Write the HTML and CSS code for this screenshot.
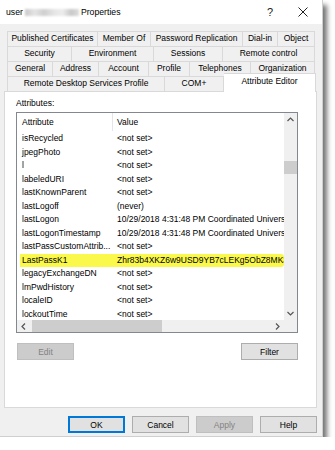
FILE: index.html
```html
<!DOCTYPE html>
<html lang="en">
<head>
    <meta charset="UTF-8">
    <title>Properties</title>
    <link rel="stylesheet" href="styles.css">
</head>
<body>
    <div class="dialog">
        <div class="titlebar">
            <span class="title">user<span class="blurred"></span>Properties</span>
            <span class="help-mark">?</span>
            <span class="close-mark">
                <svg width="10" height="10" viewBox="0 0 10 10"><path d="M0.5 0.5 L9.5 9.5 M9.5 0.5 L0.5 9.5" stroke="#222" stroke-width="1" fill="none"/></svg>
            </span>
        </div>
        <div class="content">
            <div class="tabs">
                <div class="tab-row">
                    <div class="tab" style="width:91px">Published Certificates</div>
                    <div class="tab" style="width:53px">Member Of</div>
                    <div class="tab" style="width:92px">Password Replication</div>
                    <div class="tab" style="width:35px">Dial-in</div>
                    <div class="tab" style="width:37px">Object</div>
                </div>
                <div class="tab-row">
                    <div class="tab" style="width:65px">Security</div>
                    <div class="tab" style="width:82px">Environment</div>
                    <div class="tab" style="width:69px">Sessions</div>
                    <div class="tab" style="width:92px">Remote control</div>
                </div>
                <div class="tab-row">
                    <div class="tab" style="width:46px">General</div>
                    <div class="tab" style="width:46px">Address</div>
                    <div class="tab" style="width:50px">Account</div>
                    <div class="tab" style="width:41px">Profile</div>
                    <div class="tab" style="width:61px">Telephones</div>
                    <div class="tab" style="width:64px">Organization</div>
                </div>
                <div class="tab-row last">
                    <div class="tab" style="width:158px">Remote Desktop Services Profile</div>
                    <div class="tab" style="width:59px">COM+</div>
                    <div class="tab selected" style="width:92px">Attribute Editor</div>
                </div>
            </div>

            <div class="panel">
                <div class="panel-label">Attributes:</div>
                <div class="listbox">
                    <div class="list-view">
                        <div class="list-head">
                            <span class="col-attr">Attribute</span>
                            <span class="col-val">Value</span>
                        </div>
                        <div class="list-body">
                            <div class="row"><span class="col-attr">isRecycled</span><span class="col-val">&lt;not set&gt;</span></div>
                            <div class="row"><span class="col-attr">jpegPhoto</span><span class="col-val">&lt;not set&gt;</span></div>
                            <div class="row"><span class="col-attr">l</span><span class="col-val">&lt;not set&gt;</span></div>
                            <div class="row"><span class="col-attr">labeledURI</span><span class="col-val">&lt;not set&gt;</span></div>
                            <div class="row"><span class="col-attr">lastKnownParent</span><span class="col-val">&lt;not set&gt;</span></div>
                            <div class="row"><span class="col-attr">lastLogoff</span><span class="col-val">(never)</span></div>
                            <div class="row"><span class="col-attr">lastLogon</span><span class="col-val">10/29/2018 4:31:48 PM Coordinated Universal Time</span></div>
                            <div class="row"><span class="col-attr">lastLogonTimestamp</span><span class="col-val">10/29/2018 4:31:48 PM Coordinated Universal Time</span></div>
                            <div class="row"><span class="col-attr">lastPassCustomAttrib...</span><span class="col-val">&lt;not set&gt;</span></div>
                            <div class="row marked"><span class="col-attr">LastPassK1</span><span class="col-val">Zhr83b4XKZ6w9USD9YB7cLEKg5ObZ8MK3</span></div>
                            <div class="row"><span class="col-attr">legacyExchangeDN</span><span class="col-val">&lt;not set&gt;</span></div>
                            <div class="row"><span class="col-attr">lmPwdHistory</span><span class="col-val">&lt;not set&gt;</span></div>
                            <div class="row"><span class="col-attr">localeID</span><span class="col-val">&lt;not set&gt;</span></div>
                            <div class="row"><span class="col-attr">lockoutTime</span><span class="col-val">&lt;not set&gt;</span></div>
                        </div>
                    </div>
                    <div class="vscroll">
                        <div class="arrow-box">
                            <svg width="7" height="5" viewBox="0 0 7 5"><path d="M0.5 4 L3.5 1 L6.5 4" stroke="#555" stroke-width="1.2" fill="none"/></svg>
                        </div>
                        <div class="vtrack"><div class="vthumb"></div></div>
                        <div class="arrow-box">
                            <svg width="7" height="5" viewBox="0 0 7 5"><path d="M0.5 1 L3.5 4 L6.5 1" stroke="#555" stroke-width="1.2" fill="none"/></svg>
                        </div>
                    </div>
                    <div class="hscroll">
                        <div class="arrow-box">
                            <svg width="5" height="7" viewBox="0 0 5 7"><path d="M4 0.5 L1 3.5 L4 6.5" stroke="#555" stroke-width="1.2" fill="none"/></svg>
                        </div>
                        <div class="htrack"><div class="hthumb"></div></div>
                        <div class="arrow-box">
                            <svg width="5" height="7" viewBox="0 0 5 7"><path d="M1 0.5 L4 3.5 L1 6.5" stroke="#555" stroke-width="1.2" fill="none"/></svg>
                        </div>
                    </div>
                    <div class="corner"></div>
                </div>
                <div class="panel-buttons">
                    <button class="btn disabled">Edit</button>
                    <button class="btn">Filter</button>
                </div>
            </div>

            <div class="footer">
                <button class="btn default">OK</button>
                <button class="btn">Cancel</button>
                <button class="btn disabled">Apply</button>
                <button class="btn">Help</button>
            </div>
        </div>
    </div>
</body>
</html>
```

FILE: styles.css
```css
body {
    margin: 0;
    padding: 0;
    background-color: #ffffff;
    font-family: "Liberation Sans", Arial, sans-serif;
    font-size: 8.5px;
    color: #000;
}
.dialog {
    width: 323px;
    height: 437px;
    box-sizing: border-box;
    background-color: #f0f0f0;
    border-right: 1px solid #cfcfcf;
    border-bottom: 1px solid #cfcfcf;
    box-shadow: 4px 5px 5px rgba(0,0,0,0.55);
}
.titlebar {
    height: 24px;
    background-color: #ffffff;
    display: flex;
    align-items: center;
    padding-left: 6px;
}
.title {
    display: flex;
    align-items: center;
    font-size: 8.7px;
    flex: 1;
}
.blurred {
    display: inline-block;
    width: 54px;
    height: 7px;
    margin: 0 2px 0 2px;
    background: linear-gradient(to right, #c9c9c9 0, #e4e4e4 18%, #cfcfcf 35%, #e6e6e6 55%, #ececec 70%, #c8c8c8 85%, #dcdcdc 100%);
    filter: blur(1px);
}
.help-mark {
    font-size: 11px;
    width: 12px;
    margin-right: 19px;
    color: #222;
}
.close-mark {
    display: flex;
    margin-right: 14px;
}
.content {
    padding: 7px 5px 0 4px;
}

/* tabs */
.tabs {
    margin-left: 3px;
}
.tab-row {
    display: flex;
    height: 15px;
}
.tab {
    box-sizing: border-box;
    height: 15px;
    border: 1px solid #d9d9d9;
    border-left: none;
    border-bottom: none;
    text-align: center;
    line-height: 13px;
    white-space: nowrap;
    overflow: hidden;
}
.tab:first-child {
    border-left: 1px solid #d9d9d9;
}
.tab.selected {
    position: relative;
    z-index: 1;
    height: 19px;
    margin-top: -3px;
    background-color: #ffffff;
    line-height: 15px;
}

/* panel */
.panel {
    box-sizing: border-box;
    width: 313px;
    height: 317px;
    background-color: #ffffff;
    border: 1px solid #d9d9d9;
    padding: 6px 0 0 11px;
}
.panel-label {
    line-height: 11px;
    margin-bottom: 3px;
}
.listbox {
    box-sizing: border-box;
    width: 282px;
    height: 221px;
    border: 1px solid #828790;
    display: grid;
    grid-template-columns: 1fr 13px;
    grid-template-rows: 1fr 12px;
}
.list-view {
    overflow: hidden;
    white-space: nowrap;
}
.list-head {
    display: flex;
    height: 18px;
    line-height: 18px;
}
.list-head .col-attr {
    border-right: 1px solid #e5e5e5;
}
.list-body {
    padding-top: 1px;
}
.row {
    display: flex;
    height: 13.5px;
    line-height: 13.5px;
}
.row.marked {
    background: linear-gradient(to right, transparent 3px, #fbf84c 3px);
    border-radius: 3px;
}
.col-attr {
    box-sizing: border-box;
    width: 96px;
    flex: none;
    padding-left: 5px;
    overflow: hidden;
}
.col-val {
    padding-left: 4px;
}

/* scrollbars */
.vscroll {
    background-color: #f0f0f0;
    display: flex;
    flex-direction: column;
}
.vscroll .arrow-box {
    height: 13px;
    display: flex;
    align-items: center;
    justify-content: center;
}
.vtrack {
    flex: 1;
    padding-top: 35px;
}
.vthumb {
    height: 13px;
    background-color: #cdcdcd;
}
.hscroll {
    background-color: #f0f0f0;
    display: flex;
}
.hscroll .arrow-box {
    width: 13px;
    display: flex;
    align-items: center;
    justify-content: center;
}
.htrack {
    flex: 1;
    padding-left: 2px;
}
.hthumb {
    width: 130px;
    height: 100%;
    background-color: #cdcdcd;
}
.corner {
    background-color: #f0f0f0;
}

/* buttons */
.btn {
    box-sizing: border-box;
    width: 57px;
    height: 17px;
    padding: 0;
    font-family: "Liberation Sans", Arial, sans-serif;
    font-size: 8.5px;
    color: #000;
    background-color: #e1e1e1;
    border: 1px solid #adadad;
    border-radius: 0;
}
.btn.disabled {
    background-color: #cccccc;
    border-color: #bfbfbf;
    color: #838383;
}
.btn.default {
    border: 2px solid #0078d7;
}
.panel-buttons {
    display: flex;
    justify-content: space-between;
    width: 282px;
    padding-left: 1px;
    box-sizing: border-box;
    margin-top: 10px;
}
.footer {
    display: flex;
    justify-content: flex-end;
    gap: 7px;
    width: 313px;
    margin-top: 8px;
}
```
